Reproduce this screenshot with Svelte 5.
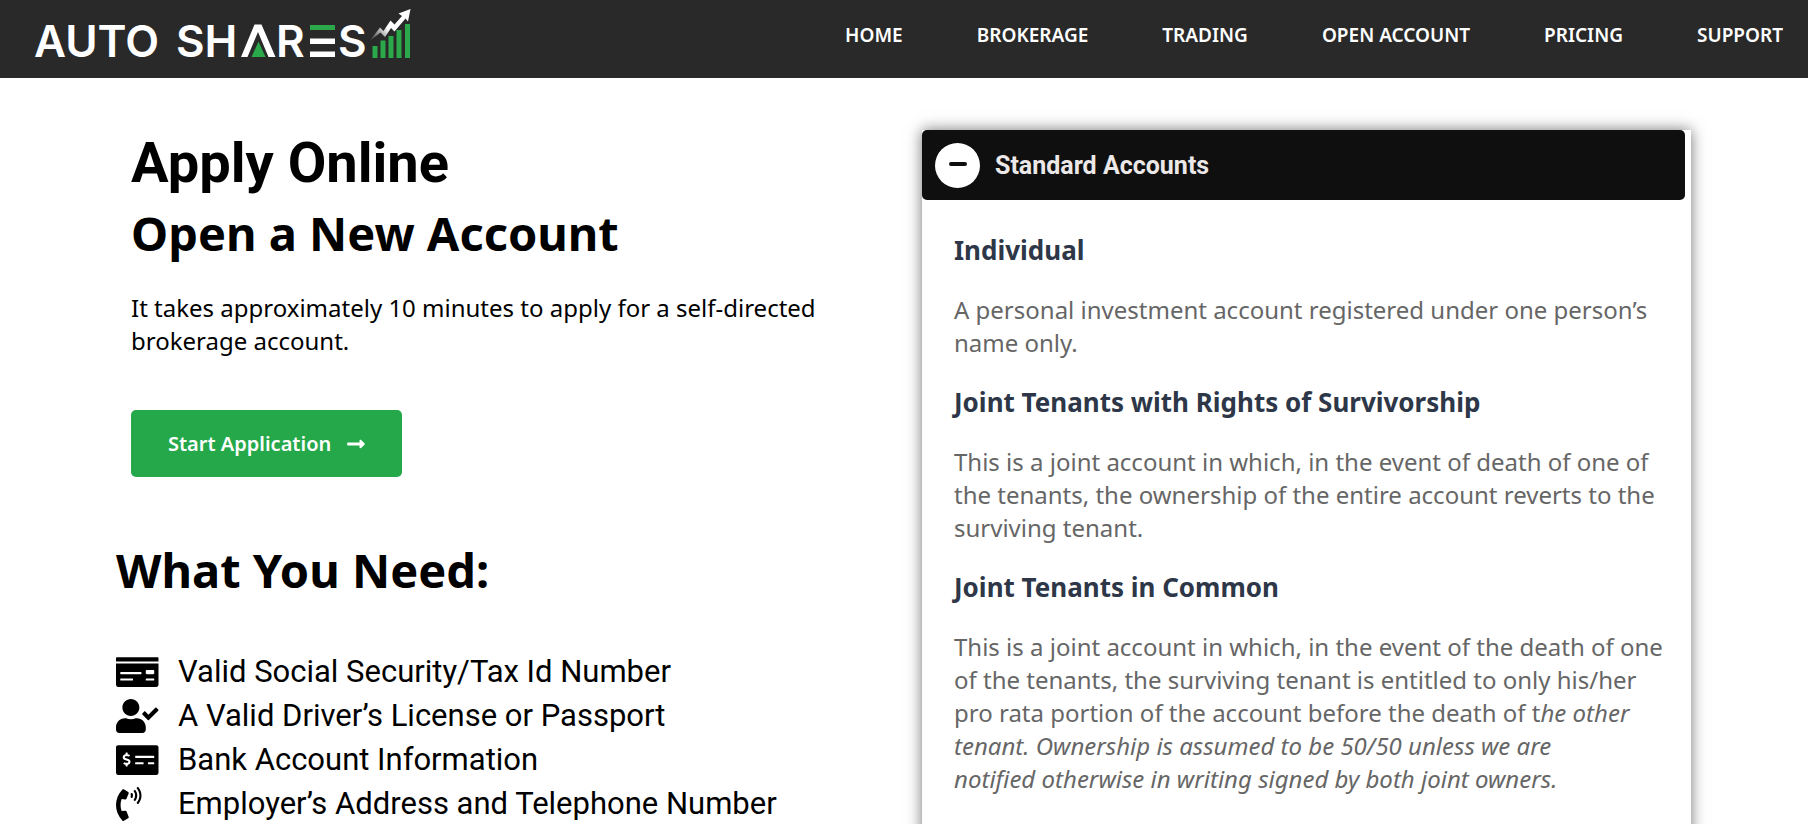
<script>
  const links = ['Home', 'Brokerage', 'Trading', 'Open Account', 'Pricing', 'Support'];

  const needs = [
    {
      text: 'Valid Social Security/Tax Id Number',
      width: 640,
      path: 'M0 448c0 17.67 14.33 32 32 32h576c17.67 0 32-14.33 32-32V128H0v320zm448-208c0-8.84 7.16-16 16-16h96c8.84 0 16 7.16 16 16v32c0 8.84-7.16 16-16 16h-96c-8.84 0-16-7.16-16-16v-32zm0 120c0-4.42 3.58-8 8-8h112c4.42 0 8 3.58 8 8v16c0 4.42-3.58 8-8 8H456c-4.42 0-8-3.58-8-8v-16zM64 264c0-4.42 3.58-8 8-8h304c4.42 0 8 3.58 8 8v16c0 4.42-3.58 8-8 8H72c-4.42 0-8-3.58-8-8v-16zm0 96c0-4.42 3.58-8 8-8h176c4.42 0 8 3.58 8 8v16c0 4.42-3.58 8-8 8H72c-4.42 0-8-3.58-8-8v-16zM624 32H16C7.16 32 0 39.16 0 48v48h640V48c0-8.84-7.16-16-16-16z'
    },
    {
      text: 'A Valid Driver’s License or Passport',
      width: 640,
      path: 'M224 256c70.7 0 128-57.3 128-128S294.7 0 224 0 96 57.3 96 128s57.3 128 128 128zm89.6 32h-16.7c-22.2 10.2-46.9 16-72.9 16s-50.6-5.8-72.9-16h-16.7C60.2 288 0 348.2 0 422.4V464c0 26.5 21.5 48 48 48h352c26.5 0 48-21.5 48-48v-41.6c0-74.2-60.2-134.4-134.4-134.4zm323-128.4l-27.8-28.1c-4.6-4.7-12.1-4.7-16.8-.1l-104.8 104-45.5-45.8c-4.6-4.7-12.1-4.7-16.8-.1l-28.1 27.9c-4.7 4.6-4.7 12.1-.1 16.8l81.7 82.3c4.6 4.7 12.1 4.7 16.8.1l141.3-140.2c4.6-4.7 4.7-12.2.1-16.8z'
    },
    {
      text: 'Bank Account Information',
      width: 640,
      path: 'M608 32H32C14.33 32 0 46.33 0 64v384c0 17.67 14.33 32 32 32h576c17.67 0 32-14.33 32-32V64c0-17.67-14.33-32-32-32zM176 327.88V344c0 4.42-3.58 8-8 8h-16c-4.42 0-8-3.58-8-8v-16.29c-11.29-.58-22.27-4.52-31.37-11.35-3.9-2.93-4.1-8.77-.57-12.14l11.75-11.21c2.77-2.64 6.89-2.76 10.13-.73 3.87 2.42 8.26 3.72 12.82 3.72h28.11c6.5 0 11.8-5.92 11.8-13.19 0-5.95-3.61-11.19-8.77-12.73l-45-13.5c-18.59-5.58-31.58-23.42-31.58-43.39 0-24.52 19.05-44.44 42.67-45.07V152c0-4.42 3.58-8 8-8h16c4.42 0 8 3.58 8 8v16.29c11.29.58 22.27 4.51 31.37 11.35 3.9 2.93 4.1 8.77.57 12.14l-11.75 11.21c-2.77 2.64-6.89 2.76-10.13.73-3.87-2.43-8.26-3.72-12.82-3.72h-28.11c-6.5 0-11.8 5.92-11.8 13.19 0 5.95 3.61 11.19 8.77 12.73l45 13.5c18.59 5.58 31.58 23.42 31.58 43.39 0 24.53-19.05 44.44-42.67 45.07zM416 312c0 4.42-3.58 8-8 8H296c-4.42 0-8-3.58-8-8v-16c0-4.42 3.58-8 8-8h112c4.42 0 8 3.58 8 8v16zm160 0c0 4.42-3.58 8-8 8h-80c-4.42 0-8-3.58-8-8v-16c0-4.42 3.58-8 8-8h80c4.42 0 8 3.58 8 8v16zm0-96c0 4.42-3.58 8-8 8H296c-4.42 0-8-3.58-8-8v-16c0-4.42 3.58-8 8-8h272c4.42 0 8 3.58 8 8v16z'
    },
    {
      text: 'Employer’s Address and Telephone Number',
      width: 384,
      path: 'M97.333 506.966c-129.874-129.874-129.681-340.252 0-469.933 5.698-5.698 14.527-6.632 21.263-2.422l64.817 40.513a17.187 17.187 0 0 1 6.849 20.958l-32.408 81.021a17.188 17.188 0 0 1-17.669 10.719l-55.81-5.58c-21.051 58.261-20.612 122.471 0 179.515l55.811-5.581a17.188 17.188 0 0 1 17.669 10.719l32.408 81.022a17.188 17.188 0 0 1-6.849 20.958l-64.817 40.513a17.19 17.19 0 0 1-21.264-2.422zM247.126 95.473c11.832 20.047 11.832 45.008 0 65.055-3.95 6.693-13.108 7.959-18.718 2.581l-5.975-5.726c-3.911-3.748-4.793-9.622-2.261-14.41a32.063 32.063 0 0 0 0-29.945c-2.533-4.788-1.65-10.662 2.261-14.41l5.975-5.726c5.61-5.378 14.768-4.112 18.718 2.581zm91.787-91.187c60.14 71.604 60.092 175.882 0 247.428-4.474 5.327-12.53 5.746-17.552.933l-5.798-5.557c-4.56-4.371-4.977-11.529-.93-16.379 49.687-59.538 49.646-145.933 0-205.422-4.047-4.85-3.631-12.008.93-16.379l5.798-5.557c5.022-4.813 13.078-4.394 17.552.933zm-45.972 44.941c36.05 46.322 36.108 111.149 0 157.546-4.39 5.641-12.697 6.251-17.856 1.304l-5.818-5.579c-4.4-4.219-4.998-11.095-1.285-15.931 26.536-34.564 26.534-82.572 0-117.134-3.713-4.836-3.115-11.711 1.285-15.931l5.818-5.579c5.159-4.947 13.466-4.337 17.856 1.304z'
    }
  ];

  let open = $state(true);
</script>

<div class="page">
  <header>
    <a class="logo" href="/" aria-label="Auto Shares">
      <svg width="384" height="78" viewBox="29 0 384 78" aria-hidden="true">
        <defs>
          <linearGradient id="trend" x1="370" y1="42" x2="388" y2="28" gradientUnits="userSpaceOnUse">
            <stop offset="0" stop-color="#fff" stop-opacity="0" />
            <stop offset="1" stop-color="#fff" />
          </linearGradient>
        </defs>
        <g class="word">
          <text x="34" y="57">AUTO</text>
          <text x="176" y="57">SH</text>
          <text x="276" y="57">R</text>
          <text x="338" y="57">S</text>
        </g>
        <path d="M241 57 254.500 24.500H261.500L275.500 57H268.500L258 32 247.500 57Z" fill="#fff" />
        <path d="M258.500 41.500 265.500 57H251.500Z" fill="#2aa84a" />
        <path d="M310 25H335V30H310Z" fill="#2aa84a" />
        <path d="M310 38.500H335V44H310ZM310 51.500H335V57H310Z" fill="#fff" />
        <path d="M372.500 46h5v12h-5zM380.500 40.500h5V58h-5zM388.500 36h5v22h-5zM396.500 30h5v28h-5zM405 24h5v34h-5z" fill="#2aa84a" />
        <path d="M369.500 41 380 27.500 383.500 31 390.500 20.500 394.500 24.500 402 16 398.500 13.500 410.500 9 408 21.500 405.500 18.500 394.500 31.500 391 28 385 37 380.500 32.500Z" fill="url(#trend)" />
      </svg>
    </a>
    <nav>
      {#each links as link}
        <a href="/">{link}</a>
      {/each}
    </nav>
  </header>

  <main>
    <section class="intro">
      <div class="apply">
        <h1>Apply Online</h1>
        <h2>Open a New Account</h2>
        <p>It takes approximately 10 minutes to apply for a self-directed brokerage account.</p>
        <a class="start" href="/">
          Start Application
          <svg width="18" height="20" viewBox="0 0 448 512" aria-hidden="true">
            <path fill="currentColor" d="M313.941 216H12c-6.627 0-12 5.373-12 12v56c0 6.627 5.373 12 12 12h301.941v46.059c0 21.382 25.851 32.09 40.971 16.971l86.059-86.059c9.373-9.373 9.373-24.569 0-33.941l-86.059-86.059c-15.119-15.119-40.971-4.411-40.971 16.971V216z" />
          </svg>
        </a>
      </div>
      <h2 class="need">What You Need:</h2>
      <ul>
        {#each needs as item}
          <li>
            <svg width="43" height="34" viewBox="0 0 {item.width} 512" preserveAspectRatio="xMinYMid meet" aria-hidden="true">
              <path d={item.path} />
            </svg>
            {item.text}
          </li>
        {/each}
      </ul>
    </section>

    <section class="card">
      <button type="button" aria-expanded={open} onclick={() => (open = !open)}>
        <span class="toggle">
          <svg width="18" height="18" viewBox="0 0 18 18" aria-hidden="true">
            <path d="M2 8H16M9 {open ? 8 : 1}V{open ? 8 : 15}" stroke="#0f0f0f" stroke-width="4" stroke-linecap="round" />
          </svg>
        </span>
        Standard Accounts
      </button>
      {#if open}
        <div class="body">
          <h3>Individual</h3>
          <p>A personal investment account registered under one person’s name only.</p>
          <h3>Joint Tenants with Rights of Survivorship</h3>
          <p>This is a joint account in which, in the event of death of one of the tenants, the ownership of the entire account reverts to the surviving tenant.</p>
          <h3>Joint Tenants in Common</h3>
          <p>This is a joint account in which, in the event of the death of one of the tenants, the surviving tenant is entitled to only his/her pro rata portion of the account before the death of t<em>he other tenant. Ownership is assumed to be 50/50 unless we are<br />notified otherwise in writing signed by both joint owners.</em></p>
        </div>
      {/if}
    </section>
  </main>
</div>

<style>
  :global(body) {
    margin: 0;
    background: #fff;
  }

  .page {
    height: 100vh;
    overflow: hidden;
    font-family: "Noto Sans", sans-serif;
    color: #000;
  }

  h1, h2, h3, p, ul {
    margin: 0;
    padding: 0;
  }

  header {
    display: flex;
    justify-content: space-between;
    height: 78px;
    padding: 0 25px 0 29px;
    box-sizing: border-box;
    background: #292929;
  }

  .logo svg {
    display: block;
  }

  .word {
    font: 600 44px Inter, sans-serif;
    fill: #fff;
  }

  nav {
    display: flex;
    align-items: center;
    gap: 74px;
    padding-bottom: 8px;
  }

  nav a {
    color: #fff;
    font-size: 19px;
    font-weight: 600;
    text-decoration: none;
    text-transform: uppercase;
  }

  main {
    display: grid;
    grid-template-columns: 1fr 1fr;
    gap: 37px;
    padding: 50px 117px 0 116px;
  }

  .apply {
    padding-left: 15px;
  }

  h1 {
    font: 700 56px/70px Roboto, sans-serif;
  }

  h2 {
    font-size: 47px;
    line-height: 70px;
  }

  p {
    font-size: 24px;
    line-height: 33px;
  }

  .apply p {
    margin-top: 23px;
  }

  .start {
    display: inline-flex;
    align-items: center;
    gap: 16px;
    height: 67px;
    margin-top: 53px;
    padding: 0 37px;
    border-radius: 5px;
    background: #24a84a;
    color: #fff;
    font-size: 20px;
    font-weight: 600;
    text-decoration: none;
  }

  .need {
    margin-top: 58px;
  }

  ul {
    margin-top: 45px;
    list-style: none;
    font: 400 31px/44px Roboto, sans-serif;
  }

  li {
    display: flex;
    align-items: center;
    gap: 19px;
  }

  .card {
    margin-top: 2px;
    padding-right: 6px;
    background: #fff;
    box-shadow: 0 0 14px rgba(0, 0, 0, 0.55);
  }

  button {
    display: flex;
    align-items: center;
    gap: 15px;
    width: 100%;
    height: 70px;
    padding: 0 13px;
    border: 0;
    border-radius: 5px;
    background: #0f0f0f;
    color: #ece8e8;
    font: 700 25px Roboto, sans-serif;
    cursor: pointer;
  }

  .toggle {
    display: flex;
    align-items: center;
    justify-content: center;
    width: 45px;
    height: 45px;
    border-radius: 50%;
    background: #fff;
  }

  .body {
    padding: 34px 20px 60px 32px;
  }

  h3 {
    color: #2d3748;
    font-size: 26px;
    line-height: 32px;
  }

  .body p {
    margin: 27px 0;
    color: #666;
  }
</style>
